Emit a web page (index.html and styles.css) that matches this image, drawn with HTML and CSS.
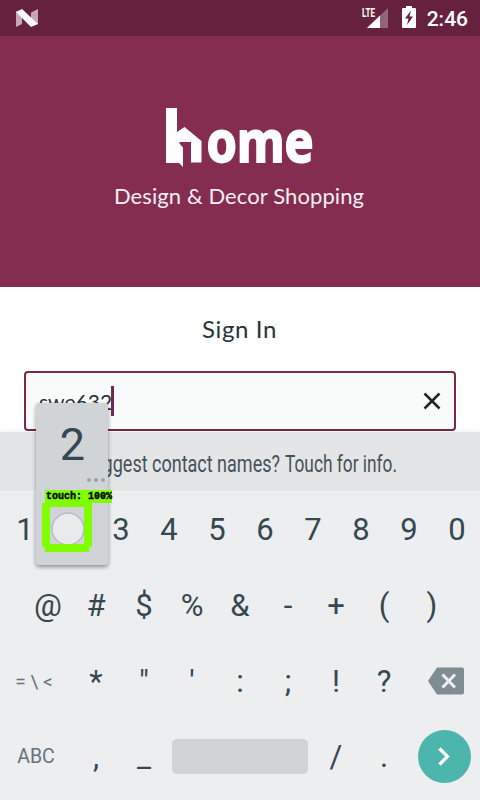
FILE: index.html
```html
<!DOCTYPE html>
<html lang="en">
<head>
<meta charset="utf-8">
<meta name="viewport" content="width=device-width, initial-scale=1">
<title>Sign In</title>
<link rel="stylesheet" href="styles.css">
</head>
<body>
<div class="screen">
  <div class="status">
    <svg class="nougat" width="24" height="20" viewBox="0 0 24 20">
      <path d="M1 3L7 6.500V16L1 19ZM16 4.500L23 1V16.500L16 12Z" fill="#c9a6b5"/>
      <path d="M1 4L7 1L23 16L16 19Z" fill="#fff"/>
    </svg>
    <div class="status-right">
      <svg width="28" height="24" viewBox="0 0 28 24">
        <path d="M26 2V22H5Z" fill="#94647b"/>
        <path d="M18 9.500V22H5Z" fill="#fff"/>
        <path d="M0 0H14V12H0Z" fill="#66213f"/>
        <text class="lte" x="0" y="10.500" textLength="13" lengthAdjust="spacingAndGlyphs">LTE</text>
      </svg>
      <svg class="battery" width="14" height="22" viewBox="0 0 14 22">
        <path d="M4 0H10V2H13Q14 2 14 3V21Q14 22 13 22H1Q0 22 0 21V3Q0 2 1 2H4Z" fill="#fff"/>
        <path d="M9 4.500L3 12.500H6.500L5 19L11 10.500H7.500Z" fill="#66213f"/>
      </svg>
      <span class="clock">2:46</span>
    </div>
  </div>

  <header class="hero">
    <svg class="logo" width="148" height="60" viewBox="0 0 148 60">
      <path d="M0 0H11V24L18.500 19L35.500 33V54.500H25V34H13.500V35.500L17 39.500V59L13 55H0Z" fill="#fff"/>
      <text class="wordmark" x="40.500" y="53.500" textLength="107" lengthAdjust="spacingAndGlyphs">ome</text>
    </svg>
    <p class="tagline">Design &amp; Decor Shopping</p>
  </header>

  <main class="form">
    <h1>Sign In</h1>
    <div class="field">
      <span class="value">swe632</span><span class="caret"></span>
      <svg class="clear" width="18" height="18" viewBox="0 0 18 18"><path d="M1.500 1.500L16.500 16.500M16.500 1.500L1.500 16.500" stroke="#18262e" stroke-width="2.500"/></svg>
    </div>
  </main>

  <section class="keyboard">
    <div class="suggest">
      <svg width="320" height="34" viewBox="0 0 320 34"><text class="hint" x="2" y="25" textLength="198" lengthAdjust="spacingAndGlyphs">Suggest contact names?</text><text class="hint" x="205" y="25" textLength="112" lengthAdjust="spacingAndGlyphs">Touch for info.</text></svg>
    </div>
    <div class="row digits"><span>1</span><span></span><span>3</span><span>4</span><span>5</span><span>6</span><span>7</span><span>8</span><span>9</span><span>0</span></div>
    <div class="row inset"><span>@</span><span>#</span><span>$</span><span>%</span><span>&amp;</span><span>-</span><span>+</span><span>(</span><span>)</span></div>
    <div class="row wide-ends">
      <span class="small symbols">= \ &lt;</span><span>*</span><span>"</span><span>'</span><span>:</span><span>;</span><span>!</span><span>?</span>
      <span class="erase"><svg width="36" height="28" viewBox="0 0 36 28"><path d="M9 .5H34Q36 .5 36 2.500V25.500Q36 27.500 34 27.500H9L0 14Z" fill="#7f8c92"/><path d="M14.500 7.500L27 20.500M27 7.500L14.500 20.500" stroke="#eceeef" stroke-width="3"/></svg></span>
    </div>
    <div class="row bottom">
      <span class="small abc">ABC</span><span>,</span><span>_</span><span><i class="space"></i></span><span>/</span><span>.</span>
      <span class="go"><svg width="53" height="53" viewBox="0 0 53 53"><circle cx="26.500" cy="26.500" r="26.500" fill="#4db6ac"/><path d="M21.500 18.500L29.500 26.500L21.500 34.500" fill="none" stroke="#fff" stroke-width="3.200"/></svg></span>
    </div>
  </section>

  <div class="popup">
    <span class="popup-key">2</span>
    <span class="more"><i></i><i></i><i></i></span>
  </div>
  <div class="touch">
    <span class="touch-label">touch: 100%</span>
    <svg width="50" height="49" viewBox="0 0 50 49">
      <circle cx="26" cy="26" r="16" fill="#e9eaec" stroke="#b8bbc6" stroke-width="1.500"/>
      <path fill-rule="evenodd" d="M0 0H50V43L47 45V49H3V45L0 43ZM8 4V41H42V4Z" fill="#80ff00"/>
    </svg>
  </div>
</div>
</body>
</html>
```
FILE: styles.css
```css
* { box-sizing: border-box; }
body { margin: 0; background: #fff; font-family: Roboto, sans-serif; }
.screen { position: relative; width: 480px; height: 800px; overflow: hidden; display: flex; flex-direction: column; }
svg { overflow: visible; }

.status { height: 36px; flex: none; background: #66213f; display: flex; align-items: center; justify-content: space-between; padding: 0 12px 0 15px; }
.status-right { display: flex; align-items: center; }
.lte { font: 700 13px Roboto, sans-serif; fill: #fff; }
.battery { margin: 0 11px 0 12px; position: relative; top: -1px; }
.clock { color: #fff; font-size: 21px; font-weight: 500; line-height: 36px; padding-top: 2px; }

.hero { height: 251px; flex: none; background: #842d50; display: flex; flex-direction: column; align-items: center; padding-top: 72px; }
.wordmark { font: 700 58px "Noto Sans", sans-serif; fill: #fff; stroke: #fff; stroke-width: 2px; }
.tagline { margin: 12px 0 0; color: #f8edf2; font: 22px/32px Lato, sans-serif; letter-spacing: .1px; padding-right: 2px; }

.form { height: 145px; flex: none; padding: 26px 24px 0; }
h1 { margin: 0 0 26px; text-align: center; font: 24px/32px Lato, sans-serif; letter-spacing: .6px; color: #27333b; padding-right: 1px; }
.field { height: 60px; border: 2px solid #78294b; border-radius: 4px; background: #f9fbfb; display: flex; align-items: center; padding: 0 13px; }
.value { font: 21px Lato, sans-serif; color: #27333b; padding-top: 1px; }
.caret { width: 3px; height: 30px; margin-left: -1px; background: #78294b; }
.clear { margin-left: auto; }

.keyboard { flex: 1; background: #eceeef; color: #37474f; box-shadow: 0 0 4px rgba(0, 0, 0, .1); position: relative; }
.suggest { height: 60px; background: #e4e5e7; border-bottom: 1px solid #f1f2f3; display: flex; align-items: center; justify-content: center; padding-top: 5px; }
.hint { font: 24px Roboto, sans-serif; fill: #455259; }
.row { height: 76px; display: grid; grid-template-columns: repeat(10, 48px); align-items: center; text-align: center; font-size: 31px; line-height: 40px; }
.digits { padding-left: 1px; }
.inset { grid-template-columns: repeat(9, 48px); padding-left: 24px; }
.wide-ends { grid-template-columns: 72px repeat(7, 48px) 72px; }
.bottom { grid-template-columns: 72px 48px 48px 144px 48px 48px 72px; margin-top: -1px; }
.small { font-size: 20px; color: #66747a; }
.symbols { font-size: 19px; padding-right: 4px; }
.abc { font-size: 19.5px; }
.erase, .go { display: flex; justify-content: center; }
.erase { padding-left: 4px; padding-bottom: 3px; }
.go { padding: 0 0 2px 1px; }
.space { display: block; width: 136px; height: 35px; margin: -2px auto 0; border-radius: 5px; background: #d0d4d7; }

.popup { position: absolute; left: 36px; top: 403px; width: 72px; height: 162px; border-radius: 3px; background: #d0d4d7; box-shadow: 0 2px 4px rgba(0, 0, 0, .4); color: #37474f; display: flex; flex-direction: column; padding: 16px 3px 0 4px; }
.popup-key { font-size: 45px; line-height: 52px; text-align: center; }
.more { display: flex; gap: 3px; justify-content: flex-end; margin-top: 7px; }
.more i { width: 4px; height: 4px; border-radius: 50%; background: #9ca3a7; }
.touch { position: absolute; left: 42px; top: 490px; }
.touch svg { display: block; }
.touch-label { display: block; width: 67px; height: 13px; margin-left: 3px; background: #80ff00; color: #000; font: 700 10px/13px "Liberation Mono", monospace; -webkit-text-stroke: .4px #000; padding-left: 1px; white-space: nowrap; }
```
